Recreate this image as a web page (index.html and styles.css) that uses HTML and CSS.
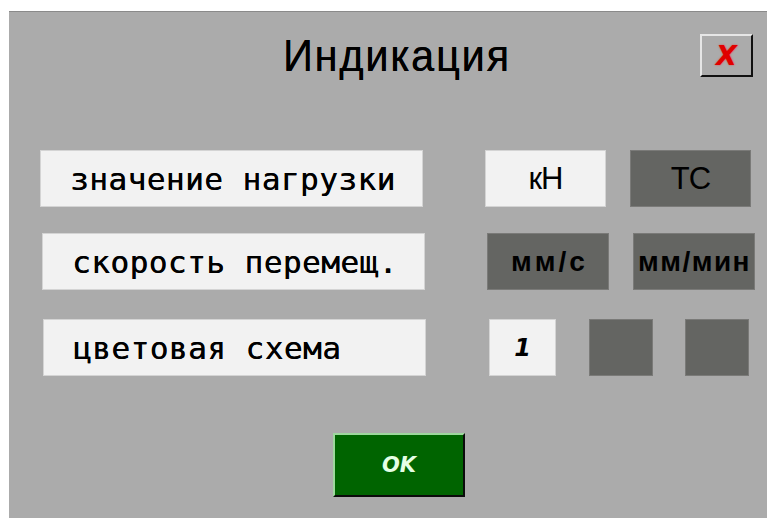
FILE: index.html
```html
<!DOCTYPE html>
<html lang="ru">
<head>
<meta charset="utf-8">
<title>Индикация</title>
<link rel="stylesheet" href="styles.css">
</head>
<body>
<div class="panel">
  <header class="head">
    <span></span>
    <h1 class="title">Индикация</h1>
    <div class="close-wrap"><button class="close">X</button></div>
  </header>

  <div class="rows">
    <div class="row row-1">
      <div class="label">значение нагрузки</div>
      <div class="opts">
        <div class="opt light unit">кН</div>
        <div class="opt dark unit">ТС</div>
      </div>
    </div>
    <div class="row row-2">
      <div class="label">скорость перемещ.</div>
      <div class="opts">
        <div class="opt dark speed">мм/с</div>
        <div class="opt dark speed long">мм/мин</div>
      </div>
    </div>
    <div class="row row-3">
      <div class="label">цветовая схема</div>
      <div class="opts scheme">
        <div class="opt light num">1</div>
        <div class="opt dark sq"></div>
        <div class="opt dark sq"></div>
      </div>
    </div>
  </div>

  <footer class="foot">
    <button class="ok">OK</button>
  </footer>
</div>
</body>
</html>
```
FILE: styles.css
```css
html, body {
  margin: 0;
  padding: 0;
  background: #ffffff;
}

body {
  width: 767px;
  height: 518px;
  overflow: hidden;
  font-family: "Liberation Sans", Arial, sans-serif;
}

.panel {
  margin: 11px 0 0 9px;
  height: 507px;
  background: #ababab;
  border-top: 1px solid #8a8a8a;
  box-sizing: border-box;
  display: flex;
  flex-direction: column;
}

/* title bar */
.head {
  display: grid;
  grid-template-columns: 1fr auto 1fr;
  align-items: start;
  padding-top: 21px;
  padding-left: 18px;
  height: 110px;
  box-sizing: border-box;
}

.title {
  margin: 0;
  font-weight: normal;
  font-size: 45px;
  line-height: 46px;
  letter-spacing: 2px;
  color: #000;
  transform: scaleX(0.92);
  text-shadow: 0.3px 0 0 #000;
}

.close-wrap {
  display: flex;
  justify-content: flex-end;
  padding-right: 14px;
}

.close {
  width: 53px;
  height: 43px;
  margin-top: 1px;
  padding: 0;
  background: #ababab;
  border-style: solid;
  border-width: 2px;
  border-color: #e6e6e6 #111 #111 #e6e6e6;
  color: #e00000;
  font-family: "DejaVu Sans", sans-serif;
  font-weight: bold;
  font-style: italic;
  font-size: 27px;
  line-height: 1;
  text-shadow: 0 0 2px rgba(255, 0, 0, 0.6);
}

/* option rows */
.rows {
  display: flex;
  flex-direction: column;
  gap: 26px;
  padding-top: 28px;
}

.row {
  display: flex;
  align-items: stretch;
  height: 57px;
}

.row-1 { padding-left: 31px; }
.row-2 { padding-left: 33px; }
.row-3 { padding-left: 34px; margin-top: 3px; }

.label {
  width: 383px;
  box-sizing: border-box;
  background: #f2f2f2;
  border: 1px solid #d4d4d4;
  padding-left: 29px;
  display: flex;
  align-items: center;
  font-family: "DejaVu Sans Mono", monospace;
  font-size: 31px;
  letter-spacing: 0.5px;
  color: #000;
  text-shadow: 0.4px 0 0 #000;
}

.opts {
  display: flex;
  gap: 24px;
  margin-left: 62px;
}

.opt {
  box-sizing: border-box;
  display: flex;
  align-items: center;
  justify-content: center;
  color: #000;
}

.light {
  background: #f2f2f2;
  border: 1px solid #d4d4d4;
}

.dark {
  background: #646562;
  border: 1px solid #7a7a78;
}

.unit {
  width: 121px;
  font-size: 31px;
  letter-spacing: -1px;
}

.speed {
  width: 122px;
  font-size: 28px;
  font-weight: bold;
  letter-spacing: 3px;
  white-space: nowrap;
  padding-left: 3px;
}

.speed.long {
  letter-spacing: 1.5px;
  padding-left: 1px;
}

.scheme {
  margin-left: 63px;
  gap: 0;
}

.num {
  width: 67px;
  font-family: "DejaVu Sans", sans-serif;
  font-weight: bold;
  font-style: italic;
  font-size: 24px;
}

.sq {
  width: 64px;
  margin-left: 33px;
}

.sq + .sq {
  margin-left: 32px;
}

/* confirm */
.foot {
  flex: 1;
  display: flex;
  justify-content: center;
  padding-top: 57px;
  padding-left: 22px;
}

.ok {
  width: 132px;
  height: 64px;
  padding: 0;
  background: #006400;
  border-style: solid;
  border-width: 2px;
  border-color: #9ed89e #0a0a0a #0a0a0a #9ed89e;
  color: #e4ffe4;
  font-family: "DejaVu Sans", sans-serif;
  font-weight: bold;
  font-style: italic;
  font-size: 21px;
  letter-spacing: 0;
}
```
